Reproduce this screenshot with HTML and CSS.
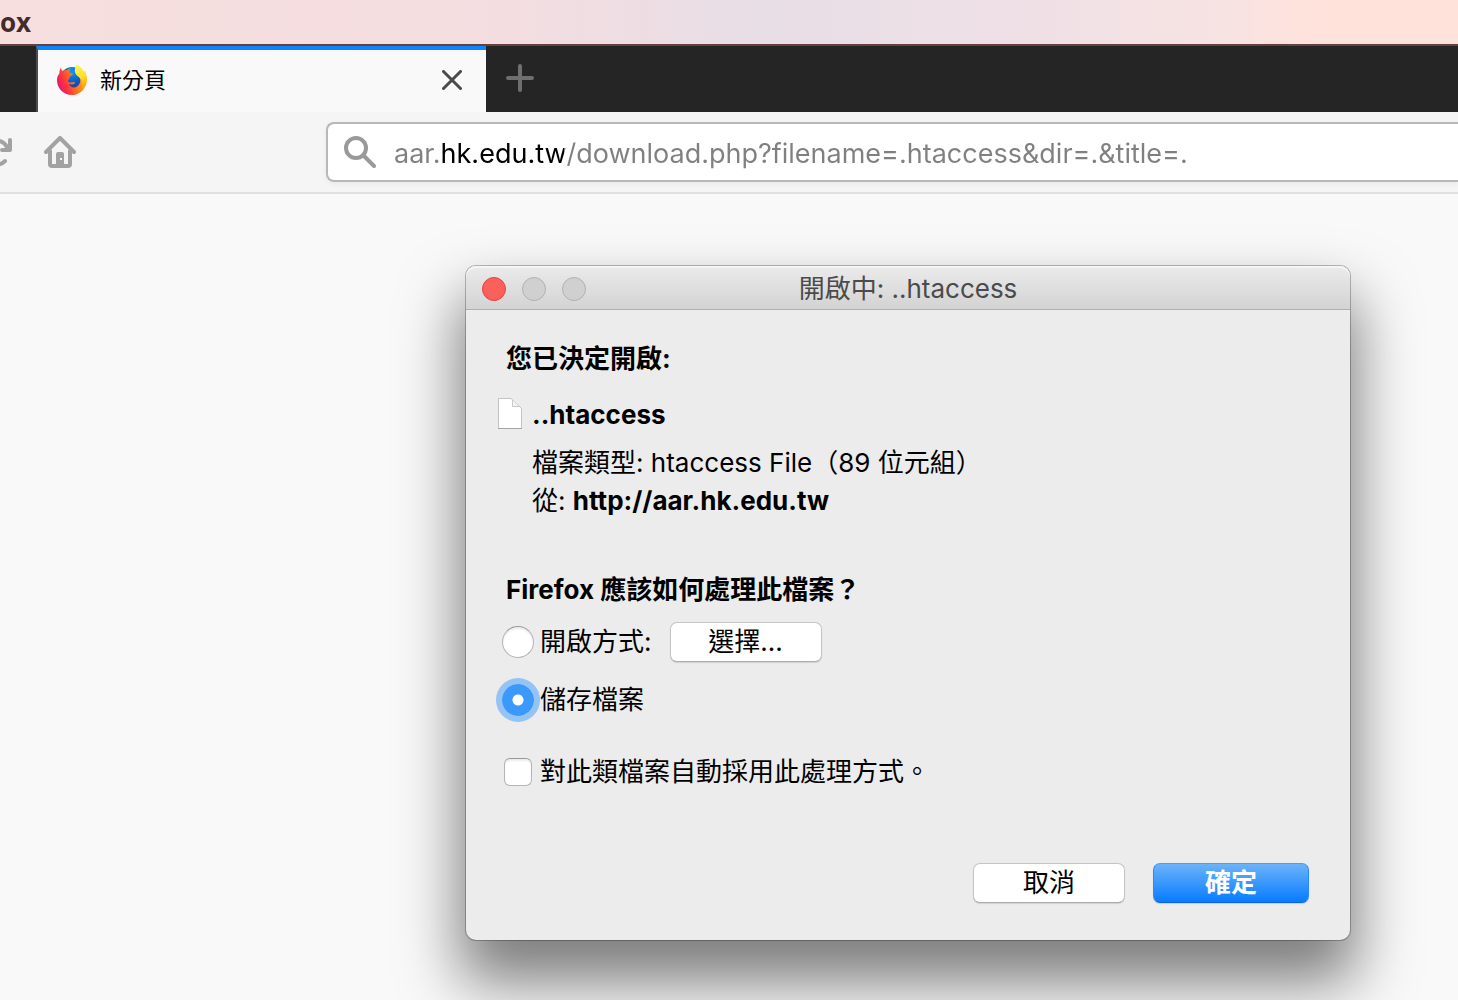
FILE: index.html
```html
<!DOCTYPE html>
<html lang="zh-Hant-TW">
<head>
    <meta charset="UTF-8">
    <meta name="viewport" content="width=device-width, initial-scale=1.0">
    <title>新分頁</title>
    <link rel="stylesheet" href="styles.css">
</head>
<body>
    <header class="menubar">
        <span class="app-name">ox</span>
    </header>

    <div class="tabbar">
        <div class="tab">
            <svg class="favicon" viewBox="0 0 32 32" aria-hidden="true">
                <defs>
                    <radialGradient id="globe" cx="0.5" cy="0.2" r="0.8">
                        <stop offset="0" stop-color="#0a9af0"/>
                        <stop offset="0.5" stop-color="#0860d0"/>
                        <stop offset="1" stop-color="#2b2c9c"/>
                    </radialGradient>
                    <linearGradient id="fox" x1="0" y1="0.7" x2="1" y2="0.3">
                        <stop offset="0" stop-color="#d8127c"/>
                        <stop offset="0.25" stop-color="#ff2f45"/>
                        <stop offset="0.5" stop-color="#ff6a1c"/>
                        <stop offset="0.8" stop-color="#ffa010"/>
                        <stop offset="1" stop-color="#ffd226"/>
                    </linearGradient>
                    <linearGradient id="tail" x1="0.3" y1="0" x2="0.6" y2="1">
                        <stop offset="0" stop-color="#fff35a"/>
                        <stop offset="0.5" stop-color="#ffe02e"/>
                        <stop offset="1" stop-color="#ff9a0c"/>
                    </linearGradient>
                </defs>
                <circle cx="16" cy="15" r="12" fill="url(#globe)"/>
                <path fill="url(#fox)" d="M5 3.500C5.200 5 5.500 6 6.500 7C8 6 10 5.800 11.500 6C12.300 5 13.500 4.500 14.500 4.500C13.500 6 13.300 7.500 14 9L17 9.800C17 11.500 14.500 12 13.500 13L13.300 15C12 15.500 11.500 17 12.500 18C14 19 16 17.600 18 18C19.300 18.400 19.500 19.400 18 20C16.500 20.500 14.500 20.500 13 20C14 23 18 24.500 21 22.500C24 20.500 25 17 24 13C23.500 11 21 9 21 5C24 7 28 9 30 14C32 23 25 31 16 31C7 31 1 24 1 16C1 13 2 11 3.400 9.500C3.300 7.500 3.800 5.500 5 3.500Z"/>
                <path fill="url(#tail)" d="M20.500 0.500C24 2 27 5 27.500 7.500L29.500 7C29.300 9 31 12 31 15C31.200 19 29 24 25 26C27 22 26.500 18 24.500 15C22.500 12 19 11 18.800 7C18.700 4.500 20 3 20.500 0.500Z"/>
            </svg>
            <span class="tab-title">新分頁</span>
            <button class="icon-button close" aria-label="關閉分頁">
                <svg width="20" height="20" viewBox="0 0 20 20"><path d="M1.500 1.500L18.500 18.500M18.500 1.500L1.500 18.500"/></svg>
            </button>
        </div>
        <button class="icon-button new-tab" aria-label="開新分頁">
            <svg width="28" height="28" viewBox="0 0 28 28"><path d="M14 2V26M2 14H26"/></svg>
        </button>
    </div>

    <nav class="toolbar">
        <button class="icon-button reload" aria-label="重新載入">
            <svg width="32" height="32" viewBox="0 0 32 32">
                <path class="line" d="M25 25A12 12 0 1 1 27 11L29 13.500M30 4V14H22"/>
            </svg>
        </button>
        <button class="icon-button home" aria-label="首頁">
            <svg width="32" height="32" viewBox="0 0 32 32">
                <path class="line" d="M2 16L16 2L30 16M6 15V28Q6 30 8 30H24Q26 30 26 28V15"/>
                <path class="solid" fill-rule="evenodd" d="M12 30V18Q12 16 14 16H18Q20 16 20 18V30ZM16 22V24H18V22Z"/>
            </svg>
        </button>
        <form class="urlbar">
            <svg class="search-icon" width="32" height="32" viewBox="0 0 32 32" aria-hidden="true">
                <circle cx="12" cy="12" r="10"/>
                <path d="M19.500 19.500L30 30"/>
            </svg>
            <input class="url" type="text" aria-label="網址" spellcheck="false" value="aar.hk.edu.tw/download.php?filename=.htaccess&amp;dir=.&amp;title=.">
        </form>
    </nav>

    <main class="page"></main>

    <section class="dialog" role="dialog" aria-labelledby="dialogTitle">
        <div class="titlebar">
            <div class="lights">
                <button class="light light-close" aria-label="關閉"></button>
                <button class="light" aria-label="縮小" disabled></button>
                <button class="light" aria-label="放大" disabled></button>
            </div>
            <h1 id="dialogTitle">開啟中: ..htaccess</h1>
        </div>
        <form class="dialog-body">
            <h2>您已決定開啟:</h2>
            <div class="file">
                <svg class="file-icon" width="26" height="34" viewBox="0 0 26 34" aria-hidden="true">
                    <path d="M1.500 0.500H14L24.500 10.500V30.500H1.500Z" fill="#fff" stroke="#c4c4c4"/>
                    <path d="M1 30.500H25" stroke="#a5a5a5"/>
                    <path d="M15.500 2V8.500H22" fill="#f4f4f4" stroke="#c8c8c8"/>
                </svg>
                <div class="file-info">
                    <strong class="file-name">..htaccess</strong>
                    <p>檔案類型: <span>htaccess File（89 位元組）</span></p>
                    <p>從: <strong>http://aar.hk.edu.tw</strong></p>
                </div>
            </div>

            <h2 class="question" id="question">Firefox 應該如何處理此檔案？</h2>
            <div class="options" role="radiogroup" aria-labelledby="question">
                <div class="option">
                    <input type="radio" name="action" id="openWith">
                    <label for="openWith">開啟方式:</label>
                    <button type="button" class="button choose">選擇...</button>
                </div>
                <div class="option">
                    <input type="radio" name="action" id="saveFile" checked>
                    <label for="saveFile">儲存檔案</label>
                </div>
            </div>
            <div class="option remember">
                <input type="checkbox" id="remember">
                <label for="remember">對此類檔案自動採用此處理方式。</label>
            </div>

            <div class="actions">
                <button type="button" class="button">取消</button>
                <button type="button" class="button primary">確定</button>
            </div>
        </form>
    </section>
</body>
</html>
```

FILE: styles.css
```css
* {
    box-sizing: border-box;
}
body {
    display: flex;
    flex-direction: column;
    min-height: 100vh;
    margin: 0;
    overflow: hidden;
    background-color: #f9f9fa;
    color: #000;
    font-family: Inter, "Noto Sans CJK TC", sans-serif;
    font-size: 26px;
    line-height: 38px;
}
h1, h2, p {
    margin: 0;
    font-size: 26px;
}
button, input {
    margin: 0;
    font-family: inherit;
    font-size: 26px;
}
.icon-button {
    display: flex;
    padding: 0;
    border: 0;
    background: none;
    fill: none;
    stroke-linecap: round;
    stroke-linejoin: round;
}

/* menu bar */
.menubar {
    height: 46px;
    border-bottom: 2px solid #66403f;
    background: linear-gradient(to right, #f7dfde, #f4dde0 34%, #e8dee6 52%, #efe0e6 70%, #f8e3e2 85%, #ffe2db 90%, #ffe3da);
}
.app-name {
    display: block;
    color: #432b2c;
    font-family: "Open Sans", sans-serif;
    font-weight: 700;
    line-height: 44px;
}

/* tabs */
.tabbar {
    display: flex;
    align-items: center;
    height: 66px;
    padding-left: 36px;
    background-color: #252525;
}
.tab {
    display: flex;
    align-items: center;
    width: 450px;
    height: 66px;
    padding: 0 24px 2px 18px;
    border-top: 4px solid #0a84ff;
    border-left: 2px solid #4c4c4c;
    background-color: #f9f9fa;
}
.favicon {
    width: 32px;
    height: 32px;
}
.tab-title {
    flex: 1;
    padding-left: 12px;
    font-size: 22px;
}
.close {
    stroke: #4a4a4b;
    stroke-width: 3;
}
.new-tab {
    margin: 0 0 2px 20px;
    stroke: #6f6f6f;
    stroke-width: 4;
}

/* navigation */
.toolbar {
    display: flex;
    align-items: center;
    height: 82px;
    border-bottom: 2px solid #e0e0e1;
    background-color: #f5f5f5;
}
.toolbar .line {
    stroke: #a2a2a2;
    stroke-width: 4;
}
.toolbar .solid {
    fill: #a2a2a2;
}
.reload {
    margin-left: -20px;
}
.home {
    margin-left: 32px;
}
.urlbar {
    display: flex;
    flex: 1;
    align-items: center;
    height: 60px;
    margin-left: 250px;
    padding-left: 16px;
    border: 2px solid #b8b8b8;
    border-right: 0;
    border-radius: 8px 0 0 8px;
    background-color: #fff;
    box-shadow: 0 2px 6px rgba(0, 0, 0, 0.05);
}
.search-icon {
    fill: none;
    stroke: #999;
    stroke-width: 4;
    stroke-linecap: round;
}
/* the registered domain is darker than the rest of the address */
.url {
    flex: 1;
    min-width: 0;
    height: 50px;
    padding: 2px 0 0 18px;
    border: 0;
    outline: 0;
    background: linear-gradient(to right, #808080 64px, #000 64px, #000 188px, #808080 188px);
    background-clip: text;
    color: transparent;
    font-size: 27px;
}
.page {
    flex: 1;
}

/* download dialog */
.dialog {
    position: absolute;
    top: 266px;
    left: 466px;
    width: 884px;
    border-radius: 10px;
    background-color: #ececec;
    box-shadow: 0 0 0 1px rgba(0, 0, 0, 0.25), 0 36px 60px 6px rgba(0, 0, 0, 0.5);
}
.titlebar {
    display: grid;
    grid-template-columns: 1fr auto 1fr;
    align-items: center;
    height: 44px;
    padding: 2px 16px 0;
    border-bottom: 1px solid #b0b0b0;
    border-radius: 10px 10px 0 0;
    background: linear-gradient(#ebebeb, #d3d3d3);
    box-shadow: inset 0 2px #f5f5f5;
}
.titlebar h1 {
    color: #4b4b4b;
    font-weight: 400;
}
.lights {
    display: flex;
    gap: 16px;
}
.light {
    width: 24px;
    height: 24px;
    padding: 0;
    border: 1px solid #b1b1b1;
    border-radius: 50%;
    background-color: #d0d0d0;
}
.light-close {
    border-color: #e0443e;
    background-color: #fc605c;
}
.dialog-body {
    padding: 30px 41px 37px 32px;
}
.dialog-body h2 {
    padding-left: 8px;
    font-weight: 700;
}
.file {
    display: flex;
    gap: 9px;
    padding-top: 18px;
}
.file-icon {
    margin: 2px 0 0 -1px;
}
.file-name {
    display: block;
    margin-bottom: 10px;
}
.question {
    margin-top: 51px;
}
.options {
    display: flex;
    flex-direction: column;
    gap: 16px;
    padding-top: 12px;
}
.option {
    display: flex;
    align-items: center;
    min-height: 42px;
    padding-left: 4px;
}
.option label {
    padding-left: 6px;
}
.option input {
    appearance: none;
    width: 32px;
    height: 32px;
    border: 1px solid #b5b5b5;
    border-top-color: #999;
    border-radius: 50%;
    background-color: #fff;
    box-shadow: inset 0 2px 2px rgba(0, 0, 0, 0.08);
}
.option input[type="radio"]:checked {
    border: 0;
    background: radial-gradient(circle, #fff 5px, #3b99fc 6px);
    box-shadow: 0 0 0 6px #94c3f5;
}
.option input[type="checkbox"] {
    width: 28px;
    height: 28px;
    margin: 0 2px;
    border-radius: 6px;
}
.remember {
    margin-top: 30px;
}
.button {
    min-width: 152px;
    height: 40px;
    padding: 0 16px;
    border: 1px solid #c4c4c4;
    border-bottom-color: #acacac;
    border-radius: 7px;
    background-color: #fff;
    box-shadow: 0 1px 1px rgba(0, 0, 0, 0.12);
    color: #000;
    line-height: 36px;
}
.choose {
    margin-left: 18px;
}
.actions {
    display: flex;
    justify-content: flex-end;
    gap: 28px;
    padding-top: 70px;
}
.primary {
    min-width: 156px;
    border-color: #4a9df5 #2f88f8 #0a64f0;
    background: linear-gradient(#6cb3fa, #067cff);
    color: #fff;
    font-weight: 700;
}
```
